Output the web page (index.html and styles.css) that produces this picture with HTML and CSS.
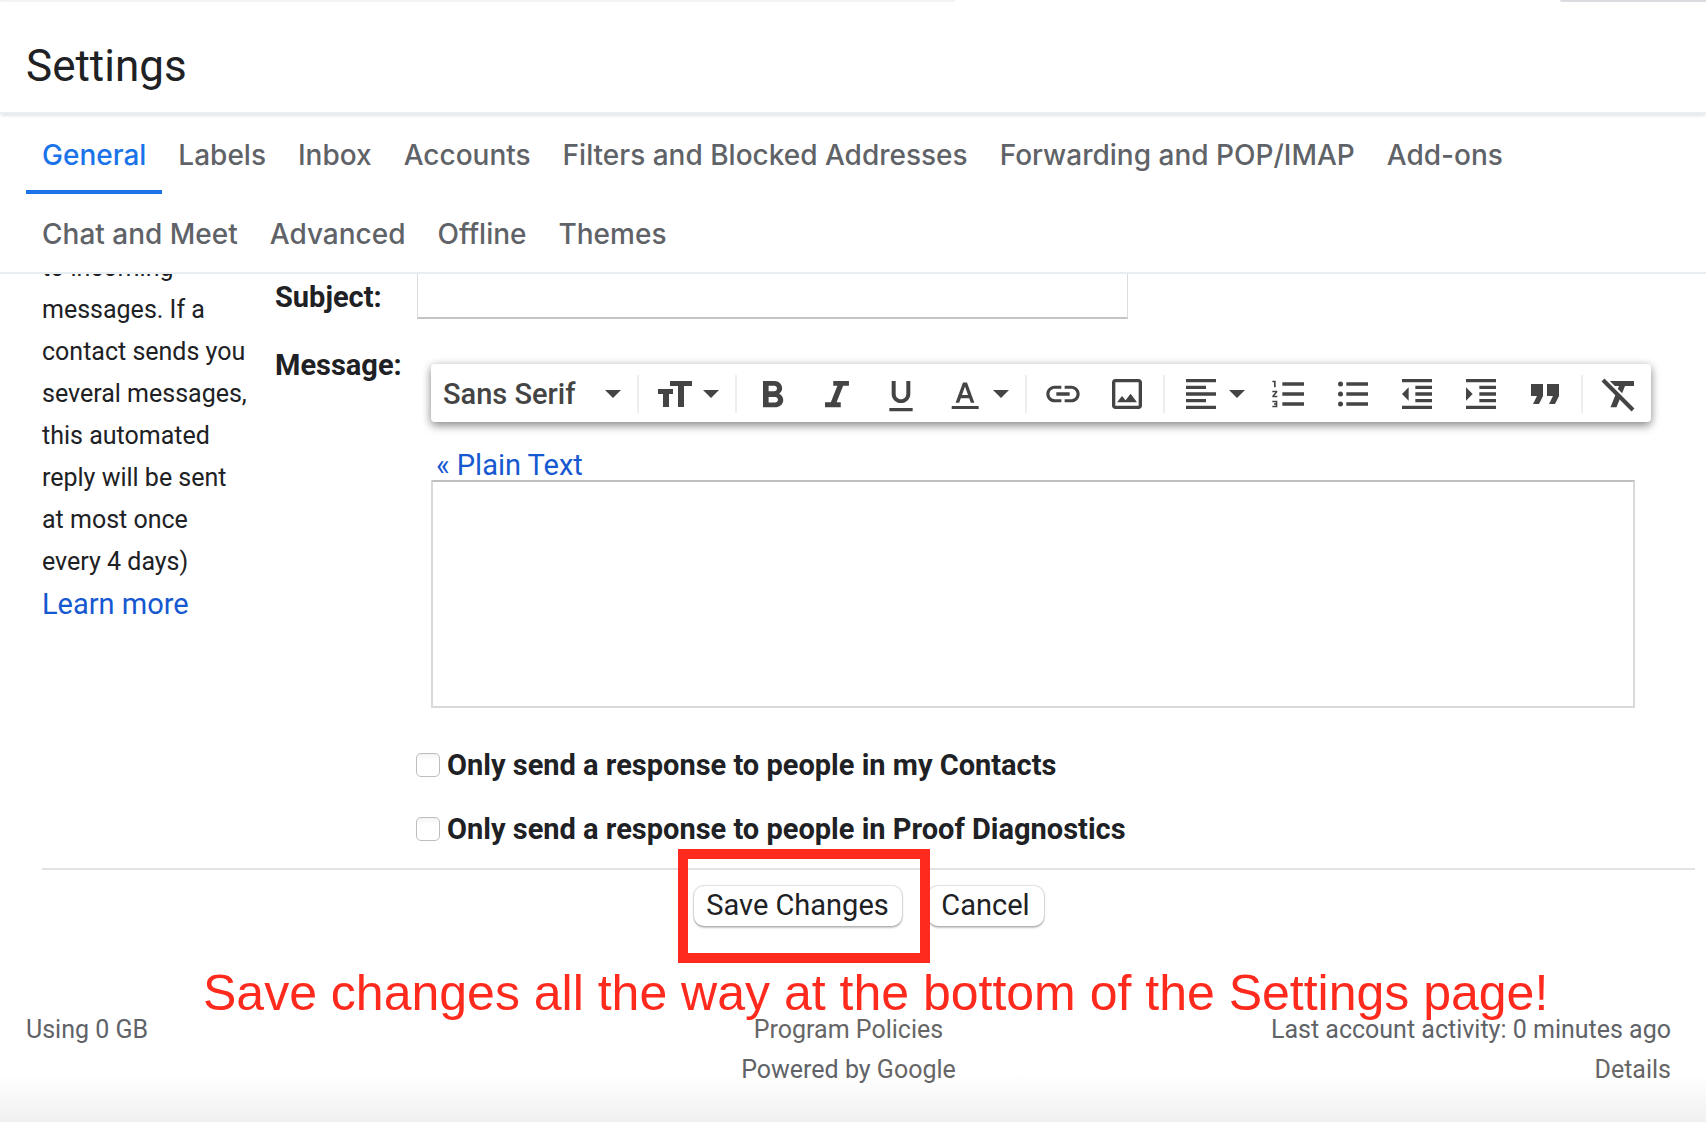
FILE: index.html
```html
<!DOCTYPE html>
<html lang="en">
<head>
<meta charset="utf-8">
<meta name="viewport" content="width=device-width, initial-scale=1">
<title>Settings</title>
<link rel="stylesheet" href="styles.css">
</head>
<body>
<header class="header">
  <div class="top-edges"><span class="edge edge-search"></span><span class="edge edge-account"></span></div>
  <h1 class="title">Settings</h1>
</header>

<nav class="tabs" aria-label="Settings sections">
  <a class="tab tab-active" href="#general" aria-current="page">General</a>
  <a class="tab" href="#labels">Labels</a>
  <a class="tab" href="#inbox">Inbox</a>
  <a class="tab" href="#accounts">Accounts</a>
  <a class="tab" href="#filters">Filters and Blocked Addresses</a>
  <a class="tab" href="#forwarding">Forwarding and POP/IMAP</a>
  <a class="tab" href="#addons">Add-ons</a>
  <a class="tab" href="#chat">Chat and Meet</a>
  <a class="tab" href="#advanced">Advanced</a>
  <a class="tab" href="#offline">Offline</a>
  <a class="tab" href="#themes">Themes</a>
</nav>

<main class="scroller">
  <form class="settings">
    <div class="responder">
      <div class="about">
        <p class="about-text">to incoming<br>messages. If a<br>contact sends you<br>several messages,<br>this automated<br>reply will be sent<br>at most once<br>every 4 days)</p>
        <a class="link" href="#learn-more">Learn more</a>
      </div>
      <div class="fields">
        <div class="field field-subject">
          <label class="label" for="subject">Subject:</label>
          <input class="subject" id="subject" type="text">
        </div>
        <div class="field field-message">
          <label class="label" for="message">Message:</label>
          <div class="editor">
            <div class="toolbar" role="toolbar" aria-label="Formatting">
              <div class="font-picker">
                <select class="font-select" aria-label="Font"><option>Sans Serif</option></select>
                <svg class="caret" viewBox="0 0 16 8"><path d="M0 0h16L8 8z"/></svg>
              </div>
              <div class="group">
                <button class="tool tool-menu" type="button" aria-label="Size">
                  <svg class="icon" viewBox="0 0 40 40"><path d="M15 7h22v5h-8v21h-6V12h-8zM3 15h15v5h-4v13H8V20H3z"/></svg>
                  <svg class="caret" viewBox="0 0 16 8"><path d="M0 0h16L8 8z"/></svg>
                </button>
              </div>
              <div class="group">
                <button class="tool" type="button" aria-label="Bold"><svg class="icon" viewBox="1.65 .26 21.4 21.4"><path d="M15.6 10.79c.97-.67 1.65-1.77 1.65-2.79 0-2.26-1.75-4-4-4H7v14h7.04c2.09 0 3.79-1.7 3.79-3.79 0-1.52-.86-2.82-2.23-3.42zM10 6.5h3c.83 0 1.5.67 1.5 1.5s-.67 1.5-1.5 1.5h-3v-3zm3.5 9H10v-3h3.5c.83 0 1.5.67 1.5 1.5s-.67 1.5-1.5 1.5z"/></svg></button>
                <button class="tool" type="button" aria-label="Italic"><svg class="icon" viewBox="1.3 .26 21.4 21.4"><path d="M10 4v2.6h2.21l-3.5 8.8H5.6V18H14v-2.6h-2.21l3.5-8.8h3.1V4z"/></svg></button>
                <button class="tool" type="button" aria-label="Underline"><svg class="icon" viewBox="0 -1.2 24 24"><path d="M12 16.2c3.1 0 5.6-2.3 5.6-5.6V3h-2.4v7.6c0 1.93-1.27 3.3-3.2 3.3s-3.2-1.37-3.2-3.3V3H6.4v7.6c0 3.3 2.5 5.6 5.6 5.6zm-7 3v1.9h14v-1.9H5z"/></svg></button>
                <button class="tool tool-menu" type="button" aria-label="Text color">
                  <svg class="icon" viewBox="0 0 40 40"><path d="M18 8.5L10.600 28.700h3.600l1.600-4.500h8.400l1.600 4.500h3.600L22 8.500zM17 21l3-8.400L23 21zM6.700 32h27v3h-27z"/></svg>
                  <svg class="caret" viewBox="0 0 16 8"><path d="M0 0h16L8 8z"/></svg>
                </button>
              </div>
              <div class="group">
                <button class="tool" type="button" aria-label="Insert link"><svg class="icon" viewBox="0 0 24 24"><path d="M3.900 12c0-1.710 1.390-3.100 3.100-3.100h4V7H7c-2.760 0-5 2.240-5 5s2.240 5 5 5h4v-1.900H7c-1.710 0-3.100-1.390-3.100-3.100zM8 13h8v-2H8v2zm9-6h-4v1.900h4c1.710 0 3.100 1.390 3.100 3.100s-1.390 3.100-3.100 3.100h-4V17h4c2.760 0 5-2.240 5-5s-2.240-5-5-5z"/></svg></button>
                <button class="tool" type="button" aria-label="Insert image"><svg class="icon" viewBox="0 0 24 24"><path d="M19 5v14H5V5h14m0-2H5c-1.100 0-2 .9-2 2v14c0 1.100.9 2 2 2h14c1.100 0 2-.9 2-2V5c0-1.100-.9-2-2-2zm-4.860 8.860l-3 3.870L9 13.140 6 17h12l-3.860-5.140z"/></svg></button>
              </div>
              <div class="group">
                <button class="tool tool-menu" type="button" aria-label="Align">
                  <svg class="icon" viewBox="0 0 24 24"><path d="M15 15H3v2h12v-2zm0-8H3v2h12V7zM3 13h18v-2H3v2zm0 8h18v-2H3v2zM3 3v2h18V3H3z"/></svg>
                  <svg class="caret" viewBox="0 0 16 8"><path d="M0 0h16L8 8z"/></svg>
                </button>
                <button class="tool" type="button" aria-label="Numbered list"><svg class="icon" viewBox="0 0 24 24"><path d="M2 17h2v.5H3v1h1v.5H2v1h3v-4H2v1zm1-9h1V4H2v1h1v3zm-1 3h1.800L2 13.100v.9h3v-1H3.200L5 10.900V10H2v1zm6-6v2h13V5H8zm0 14h13v-2H8v2zm0-6h13v-2H8v2z"/></svg></button>
                <button class="tool" type="button" aria-label="Bulleted list"><svg class="icon" viewBox="0 0 24 24"><circle cx="4.500" cy="6" r="1.500"/><circle cx="4.500" cy="12" r="1.500"/><circle cx="4.500" cy="18" r="1.500"/><path d="M8 19h13v-2H8v2zm0-6h13v-2H8v2zm0-8v2h13V5H8z"/></svg></button>
                <button class="tool" type="button" aria-label="Indent less"><svg class="icon" viewBox="0 0 24 24"><path d="M11 17h10v-2H11v2zm-8-5l4 4V8l-4 4zm0 9h18v-2H3v2zM3 3v2h18V3H3zm8 6h10V7H11v2zm0 4h10v-2H11v2z"/></svg></button>
                <button class="tool" type="button" aria-label="Indent more"><svg class="icon" viewBox="0 0 24 24"><path d="M3 21h18v-2H3v2zM3 8v8l4-4-4-4zm8 9h10v-2H11v2zM3 3v2h18V3H3zm8 6h10V7H11v2zm0 4h10v-2H11v2z"/></svg></button>
                <button class="tool" type="button" aria-label="Quote"><svg class="icon" viewBox="2 2 20 20"><path d="M6 17h3l2-4V7H5v6h3zm8 0h3l2-4V7h-6v6h3z"/></svg></button>
              </div>
              <div class="group">
                <button class="tool" type="button" aria-label="Remove formatting"><svg class="icon" viewBox="0 0 40 40"><path d="M11 7h24v5h-9l-8.500 21.300h-6L20 12h-9z"/><path class="cut" d="M2 1l36 36"/><path class="slash" d="M4 6l30 30"/></svg></button>
              </div>
            </div>
            <a class="link plain-link" href="#plain-text">« Plain Text</a>
            <textarea class="message" id="message"></textarea>
          </div>
        </div>
        <div class="checks">
          <label class="check"><input class="box" type="checkbox">Only send a response to people in my Contacts</label>
          <label class="check"><input class="box" type="checkbox">Only send a response to people in Proof Diagnostics</label>
        </div>
      </div>
    </div>
    <div class="actions">
      <div class="save-spot">
        <button class="button button-save" type="submit">Save Changes</button>
        <span class="highlight"></span>
      </div>
      <button class="button button-cancel" type="button">Cancel</button>
    </div>
  </form>
</main>

<footer class="footer">
  <div class="foot foot-start">Using 0 GB</div>
  <div class="foot foot-middle"><a class="foot-link" href="#policies">Program Policies</a><span>Powered by <a class="foot-link" href="#google">Google</a></span></div>
  <div class="foot foot-end"><span>Last account activity: 0 minutes ago</span><a class="foot-link" href="#details">Details</a></div>
  <p class="note">Save changes all the way at the bottom of the Settings page!</p>
</footer>
</body>
</html>
```
FILE: styles.css
```css
* { box-sizing: border-box; }

body {
  margin: 0;
  min-height: 100vh;
  display: flex;
  flex-direction: column;
  background: #fff;
  color: #202124;
  font: 29px/42px Roboto, "Liberation Sans", sans-serif;
}

a { text-decoration: none; }
button, input, select, textarea { font: inherit; color: inherit; margin: 0; }

/* Header */
.header {
  position: relative;
  z-index: 1;
  border-bottom: 2px solid #e9eef2;
  box-shadow: 0 2px 4px -1px rgba(0, 0, 0, .16);
}
.top-edges { display: flex; justify-content: space-between; height: 2px; }
.edge-search { width: 56%; background: #f1f3f4; border-bottom-left-radius: 4px; }
.edge-account { width: 146px; background: #dadce0; border-bottom-left-radius: 8px; }
.title {
  margin: 0;
  padding: 36px 26px 18px;
  font-size: 44px;
  line-height: 56px;
  font-weight: 400;
}

/* Tabs */
.tabs {
  display: flex;
  flex-wrap: wrap;
  padding: 0 26px;
  border-bottom: 2px solid #e9eef2;
}
.tab {
  height: 80px;
  padding: 0 16px;
  line-height: 82px;
  margin-bottom: -1px;
  color: #5f6368;
  font-family: Inter, Roboto, sans-serif;
  font-size: 28px;
  font-weight: 500;
}
.tab-active { color: #1a73e8; box-shadow: inset 0 -4px #1a73e8; }

/* Scrolled form */
.scroller { overflow: hidden; padding-bottom: 46px; }
.settings { margin-top: -27px; padding: 0 11px 0 42px; }
.responder {
  display: grid;
  grid-template-columns: 233px 1fr;
  padding-bottom: 7px;
  border-bottom: 2px solid #e3e3e3;
}
.about-text { margin: 0; font-size: 25px; }
.link { display: block; color: #1558d0; }

.field { display: grid; grid-template-columns: 142px 1fr; }
.label { font-weight: 700; }
.field-subject { padding-top: 20px; align-items: end; }
.field-subject .label { line-height: 44px; }
.subject {
  width: 100%;
  max-width: 711px;
  height: 52px;
  padding: 0 12px;
  border: 1px solid #ddd;
  border-bottom: 2px solid #c4c4c4;
}
.field-message { margin-top: 25px; }

.editor { padding: 20px 0 0 14px; }
.toolbar {
  display: flex;
  width: max-content;
  height: 58px;
  padding: 11px 0 9px;
  border-radius: 4px;
  background: #fff;
  color: #444;
  box-shadow: 0 4px 10px rgba(0, 0, 0, .4), 0 0 8px rgba(0, 0, 0, .12);
}
.font-picker { display: flex; align-items: center; width: 206px; padding: 0 16px 0 12px; }
.font-select {
  flex: 1;
  appearance: none;
  border: 0;
  padding: 0;
  background: none;
  font-weight: 500;
  line-height: 38px;
}
.group { display: flex; padding: 0 4px; border-left: 2px solid #eee; }
.group:last-child { padding-right: 0; }
.tool {
  display: flex;
  align-items: center;
  gap: 8px;
  width: 64px;
  padding: 0 12px;
  border: 0;
  background: none;
}
.tool-menu { width: 88px; }
.icon { flex: none; width: 40px; height: 40px; fill: currentColor; }
.caret { flex: none; width: 16px; height: 8px; fill: currentColor; }
.cut { stroke: #fff; stroke-width: 4; }
.slash { stroke: currentColor; stroke-width: 4; }

.plain-link { margin: 28px 0 0; padding-left: 5px; line-height: 30px; }
.message {
  display: block;
  width: calc(100% - 60px);
  height: 228px;
  padding: 8px;
  border: 2px solid #d9d9d9;
  border-top-color: #c0c0c0;
  resize: none;
}

.checks { margin: 25px 0 0 141px; }
.check {
  display: flex;
  align-items: center;
  gap: 7px;
  height: 64px;
  font-weight: 700;
}
.box {
  appearance: none;
  width: 24px;
  height: 24px;
  border: 1px solid #bdbdbd;
  border-radius: 5px;
  background: linear-gradient(#f5f5f5, #fff 30%);
}

/* Buttons */
.actions {
  display: flex;
  justify-content: center;
  gap: 26px;
  padding-top: 16px;
}
.save-spot { position: relative; display: flex; }
.button {
  height: 40px;
  padding: 0 0 3px;
  border: 0;
  border-radius: 10px;
  background: #fff;
  line-height: 36px;
  box-shadow: 0 0 1px 1px rgba(0, 0, 0, .12), 0 2px 2px rgba(0, 0, 0, .22);
}
.button-save { width: 208px; }
.button-cancel { width: 116px; }
.highlight {
  position: absolute;
  top: -37px;
  left: -16px;
  width: 252px;
  height: 114px;
  border: 10px solid #fe2a1d;
  pointer-events: none;
}

/* Footer */
.footer {
  position: relative;
  flex: 1;
  display: grid;
  grid-template-columns: 1fr 1fr 1fr;
  padding: 38px 35px 33px 26px;
  font-size: 25px;
  line-height: 40px;
  color: #5f6368;
  background: linear-gradient(to top, #f0f0f0, #fff 48px);
}
.foot { display: flex; flex-direction: column; }
.foot-middle { align-items: center; }
.foot-end { align-items: flex-end; }
.foot-link { color: #666; }
.note {
  position: absolute;
  top: -9px;
  left: 203px;
  margin: 0;
  font: 50px/60px "Liberation Sans", Arial, sans-serif;
  color: #fe2a1d;
  white-space: nowrap;
}
```
